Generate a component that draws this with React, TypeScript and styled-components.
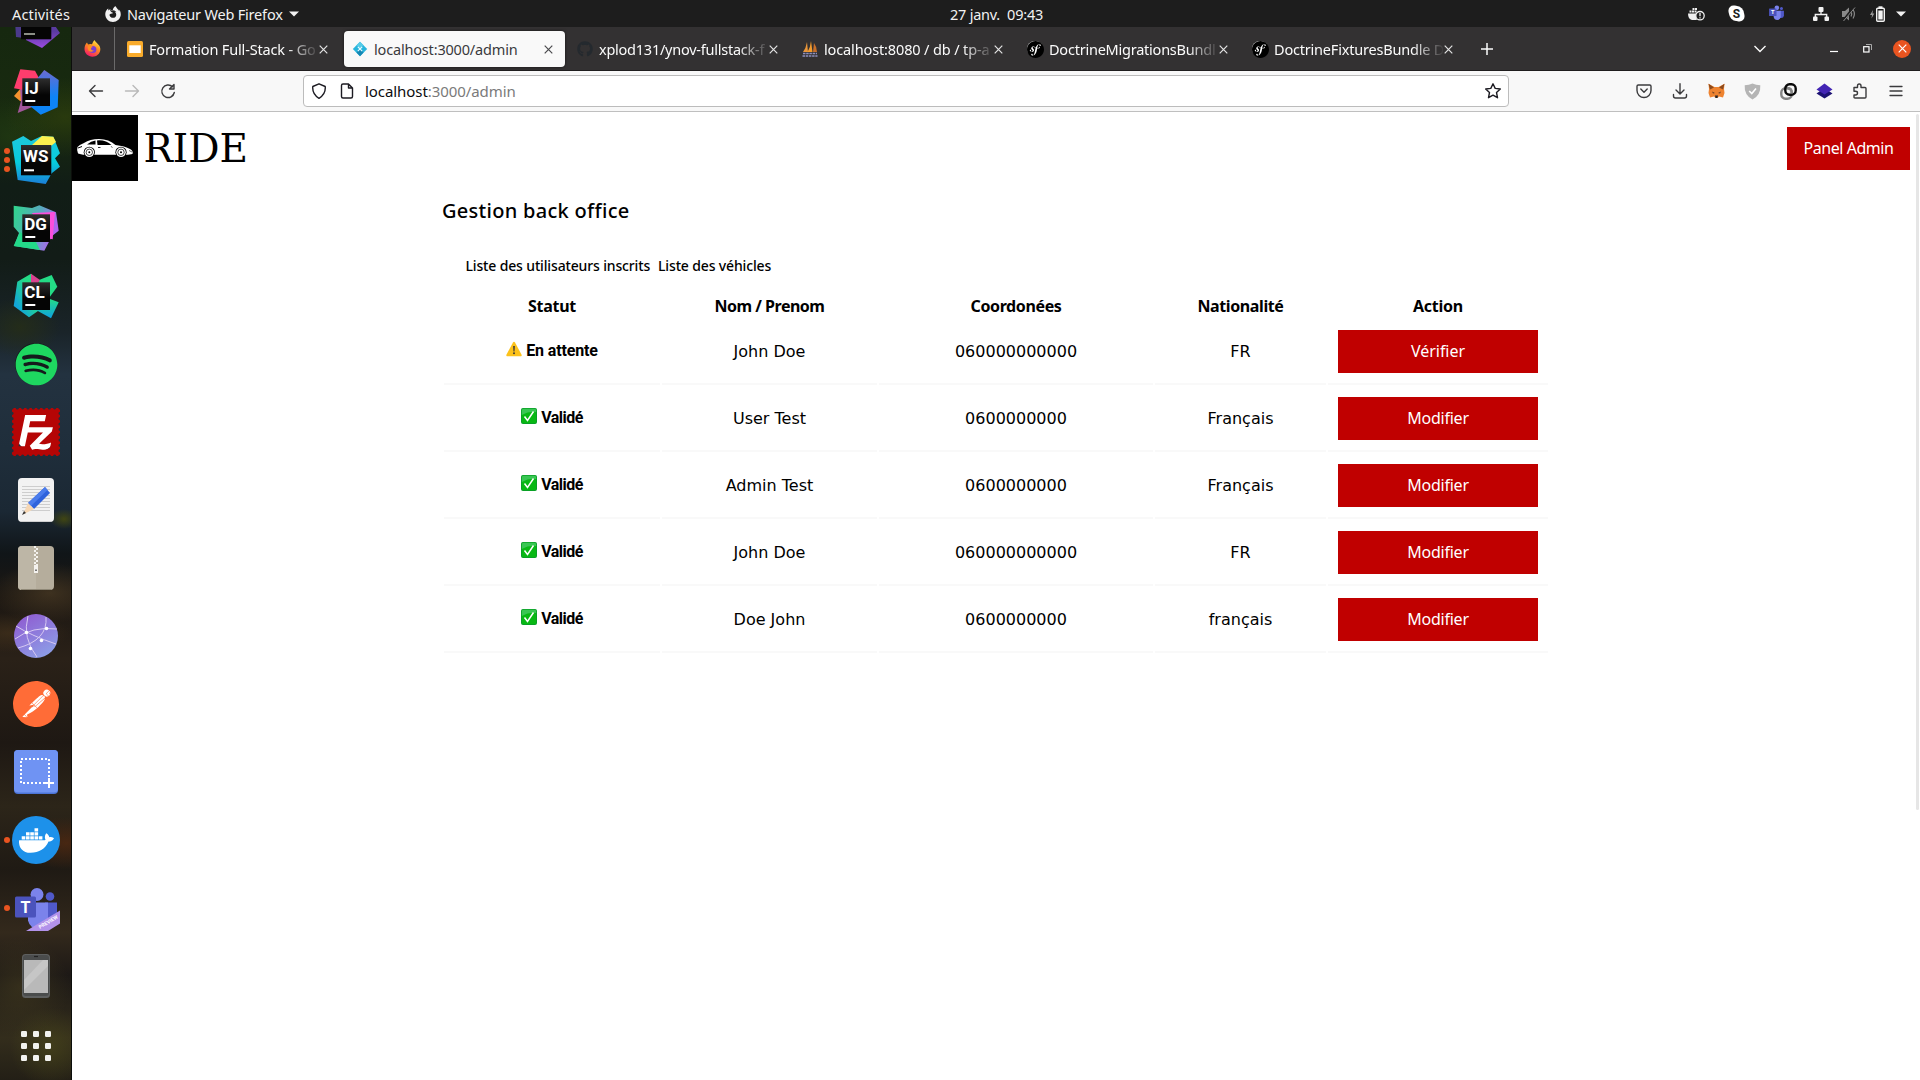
import React from "react";
import styled, { createGlobalStyle } from "styled-components";
import { SiSymfony, SiFilezilla, SiPostman, SiFirefoxbrowser } from "react-icons/si";
import { FaSpotify, FaDocker, FaGithub } from "react-icons/fa";

const UI = `"Noto Sans", "Open Sans", sans-serif`;

const GlobalStyle = createGlobalStyle`
  * { box-sizing: border-box; }
  html, body { margin: 0; background: #fff; overflow: hidden; }
  svg { display: block; flex: none; }
`;

/* ---------- Shell ---------- */
const Screen = styled.div`
  width: 1920px;
  height: 1080px;
  display: grid;
  grid-template: 27px 1053px / 72px 1848px;
  font-family: ${UI};
  overflow: hidden;
`;

const Label = styled.span<{ $ls?: number }>`
  white-space: pre;
  letter-spacing: ${(p) => p.$ls ?? 0}px;
`;

const TopBar = styled.header`
  grid-column: 1 / 3;
  background: #1d1d1d;
  color: #f2f2f2;
  font-size: 14.5px;
  line-height: 26px;
  display: grid;
  grid-template-columns: 950px 1fr auto;
  align-items: center;
`;

const TopLeft = styled.div`
  display: flex;
  align-items: center;
  padding-left: 12px;
`;

const AppMenu = styled.div`
  display: flex;
  align-items: center;
  margin-left: 35px;
  gap: 6px;
`;

const Tray = styled.div`
  display: flex;
  align-items: center;
  padding-right: 14px;
`;

const TrayItem = styled.div<{ $w: number }>`
  width: ${(p) => p.$w}px;
  display: flex;
  justify-content: center;
`;

/* ---------- Dock ---------- */
const Dock = styled.nav`
  display: flex;
  flex-direction: column;
  overflow: hidden;
  border-right: 1px solid #0c0e0b;
  background:
    radial-gradient(60px 40px at 65px 90px, rgba(52, 68, 12, 0.6), transparent),
    radial-gradient(50px 40px at 10px 110px, rgba(34, 60, 18, 0.7), transparent),
    radial-gradient(14px 10px at 64px 492px, rgba(74, 78, 12, 0.8), transparent),
    radial-gradient(40px 30px at 20px 300px, rgba(40, 48, 20, 0.7), transparent),
    radial-gradient(60px 30px at 50px 566px, rgba(84, 66, 40, 0.6), transparent),
    radial-gradient(60px 20px at 10px 606px, rgba(80, 58, 30, 0.5), transparent),
    radial-gradient(50px 26px at 66px 816px, rgba(86, 42, 16, 0.7), transparent),
    radial-gradient(50px 50px at 20px 960px, rgba(66, 58, 30, 0.6), transparent),
    radial-gradient(40px 40px at 50px 1020px, rgba(76, 74, 26, 0.6), transparent),
    linear-gradient(180deg, #16280f 0%, #182a10 9%, #111d16 15%, #121c17 22%, #1a2429 29%, #233240 33%, #1f2e3b 40%, #1b2834 46%, #101518 50%, #1c1712 54%, #2a2118 60%, #1e1813 68%, #2c2519 74%, #1f1a14 80%, #33291c 86%, #1d1916 90%, #332d1c 96%, #231f16 100%);
`;

const DockSlot = styled.div<{ $first?: boolean }>`
  height: ${(p) => (p.$first ? 31 : 68)}px;
  padding-left: 5px;
  display: grid;
  grid-template-columns: 7px 48px;
  align-items: ${(p) => (p.$first ? "start" : "center")};
  overflow: ${(p) => (p.$first ? "hidden" : "visible")};
  flex: none;
  > div:last-child { margin-top: ${(p) => (p.$first ? -27 : 0)}px; }
`;

const Dots = styled.div`
  display: flex;
  flex-direction: column;
  gap: 3px;
  margin-right: 2px;
`;

const Dot = styled.i`
  width: 6px;
  height: 6px;
  border-radius: 50%;
  background: #e95420;
  flex: none;
  margin-left: -1px;
`;

const DockIcon = styled.div`
  width: 48px;
  height: 48px;
  display: flex;
  align-items: center;
  justify-content: center;
`;

const Disc = styled.div<{ $size: number; $bg: string }>`
  width: ${(p) => p.$size}px;
  height: ${(p) => p.$size}px;
  border-radius: 50%;
  background: ${(p) => p.$bg};
  display: flex;
  align-items: center;
  justify-content: center;
  flex: none;
`;

/* ---------- Browser ---------- */
const Browser = styled.section`
  display: flex;
  flex-direction: column;
  min-width: 0;
`;

const TabStrip = styled.div`
  height: 44px;
  flex: none;
  background: #333132;
  border-bottom: 1px solid #1f1d1e;
  display: flex;
  align-items: stretch;
`;

const PinnedTab = styled.div`
  width: 43px;
  border-right: 1px solid #6b6a6a;
  display: flex;
  align-items: center;
  padding-left: 12px;
  margin-right: 4px;
`;

const TabBox = styled.div<{ $active?: boolean }>`
  width: 221px;
  margin: 4px 4px 3px 0;
  padding: 0 12px 0 8px;
  border-radius: 4px;
  display: flex;
  align-items: center;
  background: ${(p) => (p.$active ? "#f9f9f9" : "transparent")};
  color: ${(p) => (p.$active ? "#3a3a3d" : "#fbfbfb")};
  box-shadow: ${(p) => (p.$active ? "0 0 3px rgba(0,0,0,.6)" : "none")};
  font-size: 14.5px;
  line-height: 36px;
`;

const TabIcon = styled.div`
  width: 16px;
  height: 16px;
  flex: none;
  margin-right: 6px;
`;

const TabTitle = styled.div<{ $fade?: boolean }>`
  width: 169px;
  overflow: hidden;
  white-space: pre;
  margin-right: 1px;
  mask-image: ${(p) => (p.$fade ? "linear-gradient(90deg, #000 82%, transparent 101%)" : "none")};
`;

const Spacer = styled.div`flex: 1;`;

const WindowButtons = styled.div`
  display: flex;
  align-items: center;
`;

const Slot = styled.div<{ $w: number }>`
  width: ${(p) => p.$w}px;
  display: flex;
  align-items: center;
  justify-content: center;
  flex: none;
`;

const Toolbar = styled.div`
  height: 41px;
  flex: none;
  background: #f8f8f8;
  border-bottom: 1px solid #bfbfbf;
  display: flex;
  align-items: center;
  padding-left: 6px;
`;

const UrlBar = styled.div`
  width: 1206px;
  height: 32px;
  margin-left: 117px;
  border: 1px solid #bcbcbc;
  border-radius: 4px;
  background: #fff;
  display: flex;
  align-items: center;
  padding: 0 7px;
`;

const UrlText = styled.div`
  flex: 1;
  margin-left: 10px;
  font-size: 15px;
  line-height: 28px;
  color: #7a7a7a;
  letter-spacing: -0.07px;
  b { font-weight: 400; color: #0c0c0d; }
`;

const Extensions = styled.div`
  display: flex;
  margin-left: auto;
  padding-right: 6px;
`;

/* ---------- Page ---------- */
const Viewport = styled.div`
  flex: 1;
  position: relative;
  background: #fff;
  color: #000;
`;

const ScrollThumb = styled.div`
  position: absolute;
  top: 2px;
  right: 1px;
  width: 3px;
  height: 696px;
  border-radius: 2px;
  background: #e6e6e6;
`;

const SiteHeader = styled.div`
  height: 72px;
  padding: 3px 10px 3px 0;
  display: flex;
  align-items: center;
`;

const Logo = styled.div`
  width: 66px;
  height: 66px;
  background: #000;
`;

const Brand = styled.div`
  margin: 2px 0 0 5.5px;
  font: 39px/60px "DejaVu Serif", serif;
`;

const RedButton = styled.button<{ $w: number; $ls: number }>`
  display: block;
  width: ${(p) => p.$w}px;
  height: 43px;
  margin: 0 auto;
  border: 0;
  padding: 0 0 1px;
  background: #c00000;
  color: #fff;
  font: 16px/42px ${UI};
  letter-spacing: ${(p) => p.$ls}px;
`;

const Main = styled.main`
  width: 1108px;
  margin: 0 auto;
  padding-top: 15px;
`;

const Title = styled.h2`
  margin: 0;
  font-size: 20px;
  line-height: 24px;
  font-weight: 500;
  letter-spacing: 0.29px;
`;

const LinkRow = styled.div`
  margin-top: 33px;
  padding-left: 23.5px;
  display: flex;
  gap: 8px;
  font-size: 14px;
  font-weight: 500;
  line-height: 20px;
  letter-spacing: -0.15px;
`;

const Table = styled.table`
  width: 1108px;
  margin-top: 19px;
  table-layout: fixed;
  border-collapse: separate;
  border-spacing: 2px;
  text-align: center;
  font: 16px "DejaVu Sans", sans-serif;
`;

const Th = styled.th<{ $w: number; $ls: number }>`
  width: ${(p) => p.$w}px;
  height: 21px;
  padding: 0 0 2px;
  font: 700 16px/19px ${UI};
  letter-spacing: ${(p) => p.$ls}px;
`;

const Td = styled.td`
  height: 65px;
  padding: 10px 0;
  line-height: 43px;
  border-bottom: 2px solid #f9f9f9;
`;

const Status = styled.div<{ $ls: number }>`
  display: flex;
  align-items: center;
  justify-content: center;
  gap: 4px;
  font: 700 16px/42px Roboto, sans-serif;
  letter-spacing: ${(p) => p.$ls}px;
  padding-bottom: 1px;
  svg { margin-top: -4px; }
`;

/* ---------- Drawings ---------- */
const JetBox = ({ text, x, size }: { text: string; x: number; size: number }) => (
  <>
    <rect x={x} y={x} width={size} height={size} fill="url(#jetblack)" />
    <text x={x + 2} y={x + size * 0.56} fill="#fff" fontFamily="Roboto, sans-serif" fontWeight="700" fontSize="17">{text}</text>
    <rect x={x + 3} y={x + size - 6} width="10" height="2" fill="#fff" />
  </>
);

const Defs = () => (
  <defs>
    <linearGradient id="jetblack" x1="0" y1="0" x2="0" y2="1"><stop offset="0" stopColor="#2e2e2e" /><stop offset=".6" stopColor="#050505" /></linearGradient>
    <linearGradient id="ijb" x1="0" y1="0" x2="0" y2="1"><stop offset="0" stopColor="#6b6bd0" /><stop offset=".6" stopColor="#0d84f6" /></linearGradient>
    <linearGradient id="wsg" x1="0" y1="0" x2="0" y2="1"><stop offset="0" stopColor="#1ec8dc" /><stop offset=".55" stopColor="#07cddc" /><stop offset="1" stopColor="#1b7fd8" /></linearGradient>
    <linearGradient id="dgg" x1="0" y1="0" x2="1" y2=".3"><stop offset="0" stopColor="#2fd68b" /><stop offset=".6" stopColor="#5aa8c0" /><stop offset="1" stopColor="#b162f0" /></linearGradient>
    <linearGradient id="clg" x1="1" y1="0" x2="0" y2="1"><stop offset=".35" stopColor="#24dc86" /><stop offset=".8" stopColor="#12a5d8" /></linearGradient>
    <linearGradient id="clg2" x1="0" y1="0" x2="0" y2="1"><stop offset="0" stopColor="#24dc86" /><stop offset="1" stopColor="#0e9fe0" /></linearGradient>
    <linearGradient id="prp" x1="0" y1="0" x2="0" y2="1"><stop offset=".4" stopColor="#5a3aa0" /><stop offset="1" stopColor="#9a4be0" /></linearGradient>
    <linearGradient id="web" x1="0" y1="0" x2=".6" y2="1"><stop offset="0" stopColor="#8f55cf" /><stop offset="1" stopColor="#8d9be6" /></linearGradient>
    <linearGradient id="ffx" x1=".8" y1="0" x2=".3" y2="1"><stop offset="0" stopColor="#fff04a" /><stop offset=".45" stopColor="#ff8a1e" /><stop offset="1" stopColor="#f5156c" /></linearGradient>
  </defs>
);

const PurpleJet = () => (
  <svg width="48" height="48" viewBox="0 0 48 48">
    <Defs />
    <path d="M3 20H12V38L4 37Z" fill="#4a3a8a" />
    <path d="M14 38L39 20L48 33L30 48L14 40Z" fill="url(#prp)" />
    <rect x="9" y="9" width="30.300" height="30.300" fill="url(#jetblack)" />
    <rect x="12" y="33" width="11" height="2" fill="#8b8f86" />
  </svg>
);
const IJ = () => (
  <svg width="48" height="48" viewBox="0 0 48 48">
    <path d="M2 28L9 20L12 34L8 33Z" fill="#f5922f" />
    <path d="M8 20H30L25 37L5.700 45L9 33Z" fill="#a2569a" />
    <path d="M8.300 1.300L23 2.700L28 12L12 22L2 20.300Z" fill="#fe3d6d" />
    <path d="M32.300 2L46.700 12L45.700 39.300L28.700 46.700L18 38L24 12Z" fill="url(#ijb)" />
    <JetBox text="IJ" x={10.3} size={27.7} />
  </svg>
);
const WS = () => (
  <svg width="48" height="48" viewBox="0 0 48 48">
    <path d="M0 5.700L11.300 0L19 5L29.700 0L41.300 .7L48 17.300L43 22.300L48 30.700L39.700 37.300L33.700 48L5.700 44Z" fill="url(#wsg)" />
    <path d="M20 9L30 0L41.300 .7L44 6L39 10Z" fill="#fcf04f" />
    <JetBox text="WS" x={9} size={30.3} />
  </svg>
);
const DG = () => (
  <svg width="48" height="48" viewBox="0 0 48 48">
    <path d="M27.300 1.300L44 8.300L46.700 26.700L40 32L32.300 46.700L2 42L7 29L1.700 22.700V1.700L20 4Z" fill="url(#dgg)" />
    <path d="M1.700 42L8 28L24 38L28 46Z" fill="#23d989" />
    <path d="M20 9L43 8L40.700 35.300L34 34Z" fill="#fb4fdc" />
    <JetBox text="DG" x={10.3} size={27.7} />
  </svg>
);
const CL = () => (
  <svg width="48" height="48" viewBox="0 0 48 48">
    <path d="M19 1.700L5.300 9.700L1.700 34L17 45.300L26 39L26 8Z" fill="url(#clg)" />
    <path d="M24 38L38 27L46.700 30.300L39 46.300Z" fill="url(#clg2)" />
    <path d="M27 8L39.700 3L45.300 14.700L37 26L24 20Z" fill="#24dc86" />
    <path d="M19 1.700L28 8L24 14H19Z" fill="#d8418f" />
    <JetBox text="CL" x={10.3} size={27.7} />
  </svg>
);
const Spotify = () => <Disc $size={42} $bg="#151a1c"><FaSpotify size={43} color="#1ed760" /></Disc>;
const FileZillaTile = styled.div`
  width: 48px;
  height: 48px;
  background: radial-gradient(circle, #fff 0 20px, transparent 21px);
  svg { width: 48px; height: 48px; color: #b50505; }
`;
const Doc = () => (
  <svg width="48" height="48" viewBox="0 0 48 48">
    <rect x="6" y="2" width="36" height="44" rx="4" fill="#f2f2f2" />
    <path d="M9 45.500H39" stroke="#cfcfcf" />
    <path d="M10 10.500H38M10 13.500H38M10 16.500H38M10 19.500H38M10 22.500H38M10 25.500H38M10 28.500H38M10 31.500H38M10 34.500H38" stroke="#cdcdcd" />
    <path d="M33 11L38 17L22 33L16 27Z" fill="#2f63dc" /><path d="M33 11L35.500 14L19 30L16 27Z" fill="#4a7cec" />
    <path d="M16 27L22 33L11 38.500Z" fill="#f6d7b4" /><path d="M12 35L14 37L10 39Z" fill="#333" />
  </svg>
);
const Zip = () => (
  <svg width="48" height="48" viewBox="0 0 48 48">
    <rect x="6" y="2" width="36" height="44" rx="4" fill="#b5ad9c" />
    <path d="M24 2H10Q6 2 6 6V42Q6 46 10 46H24Z" fill="#bdb6a6" />
    <path d="M9 45.500H39" stroke="#8f8877" />
    <path d="M23 2V22" stroke="#f4f2ee" strokeWidth="2" strokeDasharray="2 2" /><path d="M25 4V22" stroke="#f4f2ee" strokeWidth="2" strokeDasharray="2 2" />
    <rect x="22" y="21" width="4" height="8" fill="#f4f2ee" /><rect x="23" y="25.500" width="2" height="1.500" fill="#777" />
  </svg>
);
const Web = () => (
  <svg width="48" height="48" viewBox="0 0 48 48">
    <circle cx="24" cy="24" r="22" fill="url(#web)" />
    <g stroke="#d6c8f2" strokeWidth="1" fill="none"><path d="M4 14Q20 24 44 32M16 4Q10 26 25 45M34 5Q36 28 6 36M3 27Q20 14 45 17" /></g>
    <g fill="#fff"><circle cx="14.500" cy="20.500" r="1.800" /><circle cx="34.500" cy="16.500" r="1.800" /><circle cx="29.500" cy="28.500" r="1.800" /><circle cx="18.500" cy="36.500" r="1.800" /></g>
  </svg>
);
const Shot = () => (
  <svg width="48" height="48" viewBox="0 0 48 48">
    <rect x="2" y="2" width="44" height="44" rx="4" fill="#4c74d6" /><rect x="2" y="2" width="44" height="42.500" rx="4" fill="#6f93f3" />
    <rect x="9" y="11" width="28" height="24" fill="none" stroke="#fff" strokeWidth="2" strokeDasharray="2 2" />
    <path d="M37 30V40M32 35H42" stroke="#fff" strokeWidth="2" />
  </svg>
);
const TeamsIcon = ({ size, preview }: { size: number; preview?: boolean }) => (
  <svg width={size} height={size} viewBox={preview ? "0 -2.5 48 48" : "0 0 48 48"}>
    <circle cx="25" cy="8" r="6.500" fill="#7b83eb" /><circle cx="38" cy="10" r="4.300" fill="#5059c9" />
    <path d="M33 16H45V30Q44 37 37 37H33Z" fill="#5059c9" />
    <path d="M16 16H36V34Q34 42 26 42Q18 42 16 34Z" fill="#7b83eb" />
    <rect x="3" y="10" width="21" height="21" rx="1.500" fill="#4b53bc" />
    <text x="13.500" y="26" textAnchor="middle" fill="#fff" fontFamily="Roboto, sans-serif" fontWeight="700" fontSize="16">T</text>
    {preview && (
      <>
        <path d="M14 44.500L48 24V37L36 44.500Z" fill="#b292ea" />
        <text transform="translate(28 42.500) rotate(-31)" fill="#fff" fontFamily="Roboto, sans-serif" fontWeight="700" fontSize="5">PREVIEW</text>
      </>
    )}
  </svg>
);
const Phone = () => (
  <svg width="48" height="48" viewBox="0 0 48 48">
    <rect x="10" y="2" width="28" height="44" rx="3.500" fill="#5d5f5f" /><rect x="11" y="3" width="26" height="41" rx="3" fill="#4a4c4c" />
    <rect x="12" y="8" width="24" height="33" fill="#b9b9b9" /><path d="M12 28L31 8H36V14L12 38Z" fill="#c6c6c6" />
    <path d="M22 4.500H26" stroke="#222" strokeWidth="1.200" />
  </svg>
);
const Grid = () => (
  <svg width="48" height="48" viewBox="0 0 48 48">
    {[0, 1, 2].map((r) => [0, 1, 2].map((c) => <rect key={`${r}${c}`} x={9 + c * 12} y={11 + r * 12} width="6" height="6" rx="1.200" fill="#f2f2ef" />))}
  </svg>
);

const Close = ({ c = "#e4e4e4" }) => (
  <svg width="9" height="9" viewBox="0 0 9 9"><path d="M.7.7L8.300 8.300M8.300.7L.7 8.300" stroke={c} strokeWidth="1.200" /></svg>
);
const Stroke = ({ d, size = 16, c = "#3b3b3d", w = 1.4 }: { d: string; size?: number; c?: string; w?: number }) => (
  <svg width={size} height={size} viewBox="0 0 16 16" fill="none" stroke={c} strokeWidth={w} strokeLinecap="round" strokeLinejoin="round"><path d={d} /></svg>
);
const FirefoxColor = () => (
  <svg width="17" height="17" viewBox="0 0 17 17">
    <path d="M10.500 0C11 1.600 12.500 2.200 14 4.300C16 6 16.500 8 16.300 10C15.800 14 12.500 16.700 8.500 16.700C4 16.700.5 13.200.5 9C.5 6.300 1.500 4 3 2.500L4 4.500Q6 3.500 8 4.200Q9 1.500 10.500 0Z" fill="url(#ffx)" />
    <circle cx="8.800" cy="9.500" r="3.600" fill="#7a3fd0" /><path d="M4 6Q7 5 9 7Q7 7 7 8.500Q7 10.500 10 10.500Q7 13 4.500 10.500Q3 8 4 6Z" fill="#ff8f22" />
  </svg>
);
const Slides = () => (
  <svg width="16" height="16" viewBox="0 0 16 16"><rect width="16" height="16" rx="1.500" fill="#f9ab2b" /><rect x="2.300" y="4.300" width="11.400" height="7.700" fill="#fff" /></svg>
);
const DiamondIcon = () => (
  <svg width="16" height="16" viewBox="0 0 16 16">
    <path d="M8 .8L15.200 8L8 15.200L.8 8Z" fill="#27b4dc" /><path d="M8 .8L11.500 4.300L8 8L4.500 4.300Z" fill="#55cbe8" /><path d="M8 8L11.500 11.500L8 15.200L4.500 11.500Z" fill="#1688b4" />
    <path d="M5.800 5.800L10.200 10.200M10.200 5.800L5.800 10.200" stroke="#eafaff" strokeWidth="1.100" />
  </svg>
);
const Sails = () => (
  <svg width="16" height="16" viewBox="0 0 16 16">
    <path d="M5 1L6 11H1Q4 7 5 1Z" fill="#e9963a" /><path d="M9 0L10.500 11H5.500Q8.500 6 9 0Z" fill="#f39b2d" /><path d="M12 2Q15 6 15 11H11Z" fill="#c8702a" />
    <path d="M1 12.500H15M.5 15H15.500" stroke="#8e8fbd" strokeWidth="1.700" strokeDasharray="2.500 .7" />
  </svg>
);
const Fox = () => (
  <svg width="17" height="16" viewBox="0 0 17 16">
    <path d="M.5.8L6.500 4H10.500L16.500.8L16 6L16.500 10L15 14.500L11 13.500L9.500 15H7.500L6 13.500L2 14.500L.5 10L1 6Z" fill="#ee8330" />
    <path d="M.5.8L6 4.500L2 6.500ZM16.500.8L11 4.500L15 6.500Z" fill="#8a4a1e" /><path d="M4 8.500L7 10L5 10.500ZM13 8.500L10 10L12 10.500Z" fill="#5a3a24" /><path d="M7 12.500H10L9.500 15H7.500Z" fill="#20242a" />
  </svg>
);
const ShieldCheck = () => (
  <svg width="17" height="17" viewBox="0 0 17 17"><path d="M8.500.5Q12 2 16.300 2.200Q17 12 8.500 16.500Q0 12 .7 2.200Q5 2 8.500.5Z" fill="#b5b5b5" /><path d="M5.200 8L7.800 10.600L12 5.500" fill="none" stroke="#fff" strokeWidth="1.600" /></svg>
);
const Rings = () => (
  <svg width="17" height="17" viewBox="0 0 17 17" fill="none" strokeWidth="2.400">
    <rect x="1.300" y="5.300" width="10.400" height="10.400" rx="4.200" stroke="#858585" />
    <rect x="5.300" y="1.300" width="10.400" height="10.400" rx="4.200" stroke="#0a0a0a" />
    <path d="M7.500 5.300Q11.700 5.300 11.700 9.500V10.500" stroke="#858585" />
  </svg>
);
const Layers = () => (
  <svg width="17" height="16" viewBox="0 0 17 16"><path d="M8.500 5L16.500 10.500L8.500 15.500L.5 10.500Z" fill="#1c1273" /><path d="M8.500 .5L16.500 6.500L8.500 11.500L.5 6.500Z" fill="#4325b4" /></svg>
);
const DockerTray = () => (
  <svg width="17" height="16" viewBox="0 0 17 16"><path d="M0 7.500H9Q7 11 9 14H4Q0 13 0 7.500Z" fill="#f0f0f0" /><path d="M1.500 5.500H9M4.500 3H9" stroke="#f0f0f0" strokeWidth="2" strokeDasharray="2 .5" /><circle cx="12" cy="9.700" r="4.200" fill="#1d1d1d" stroke="#f0f0f0" strokeWidth="1.300" /><path d="M12 7V10.200M12 11.300V12.500" stroke="#f0f0f0" strokeWidth="1.300" /></svg>
);
const SkypeTray = () => (
  <svg width="17" height="17" viewBox="0 0 17 17"><rect x=".5" y=".5" width="11" height="11" rx="5" fill="#fff" /><rect x="5.500" y="5.500" width="11" height="11" rx="5" fill="#fff" /><circle cx="8.500" cy="8.500" r="7.400" fill="#fff" />
    <text x="8.500" y="12.700" textAnchor="middle" fill="#1d1d1d" fontFamily="Roboto, sans-serif" fontWeight="700" fontSize="12">S</text></svg>
);
const Network = () => (
  <svg width="16" height="16" viewBox="0 0 16 16"><g fill="#f2f2f2"><rect x="5.500" y="1" width="5" height="5" rx="1" /><rect x="0" y="10.500" width="4.500" height="4.500" rx="1" /><rect x="11.500" y="10.500" width="4.500" height="4.500" rx="1" /></g><path d="M8 5V8.500M2.300 11V8.500H13.700V11" stroke="#f2f2f2" fill="none" strokeWidth="1.300" /></svg>
);
const Muted = () => (
  <svg width="16" height="16" viewBox="0 0 16 16"><path d="M1 5H4L8 1.500V14.500L4 11H1Z" fill="#8a8a8a" /><path d="M10 5.500Q11.500 8 10 10.500M12 3.500Q14.800 8 12 12.500" stroke="#8a8a8a" fill="none" strokeWidth="1.200" /><path d="M13 1L2 15" stroke="#1d1d1d" strokeWidth="2.500" /><path d="M14 1.500L2.500 15" stroke="#8a8a8a" /></svg>
);
const Battery = () => (
  <svg width="15" height="16" viewBox="0 0 15 16"><path d="M3 4L0 9H2L1.500 12.500L4.300 7.500H2.500Z" fill="#9a9a9a" /><rect x="6.700" y="2.200" width="7.600" height="13" rx="1" fill="none" stroke="#f2f2f2" strokeWidth="1.400" /><rect x="8.500" y=".3" width="4" height="2" fill="#f2f2f2" /><rect x="8.300" y="4.500" width="4.400" height="9" fill="#f2f2f2" /></svg>
);
const Caret = () => <svg width="10" height="6" viewBox="0 0 10 6"><path d="M0 .5H10L5 5.500Z" fill="#f2f2f2" /></svg>;

const Car = () => (
  <svg width="66" height="66" viewBox="0 0 66 66">
    <path d="M5.500 32Q7 30 12 28Q18 24 27 24Q37 24 43.500 30Q53 31 58 34Q61.500 36 60.500 39L56 39.800H11L6 38.500Q4.500 35 5.500 32Z" fill="#fff" />
    <path d="M15 29.500Q19 25.800 23.500 25.500V29.500ZM25 25.400Q34 24.700 39.500 30L25.500 30Z" fill="#000" />
    <path d="M39 31L40.500 33" stroke="#000" strokeWidth=".5" fill="none" /><path d="M26 32.500H28.500" stroke="#000" strokeWidth=".8" /><path d="M6 33L10 31.500" stroke="#000" /><path d="M57 35.500L60 37" stroke="#000" strokeWidth=".6" />
    {[17.3, 49].map((x) => (
      <g key={x}><circle cx={x} cy="37.300" r="5.600" fill="#000" /><circle cx={x} cy="37.300" r="4.800" fill="#fff" /><circle cx={x} cy="37.300" r="3.200" fill="none" stroke="#000" strokeWidth=".7" /><circle cx={x} cy="37.300" r="1" fill="#000" /></g>
    ))}
  </svg>
);
const Warn = () => (
  <svg width="16" height="16" viewBox="0 0 16 16"><path d="M8 .8Q8.600 .8 9 1.500L15.600 13.800Q15.900 15.200 15 15.200H1Q.1 15.200 .4 13.800L7 1.500Q7.400 .8 8 .8Z" fill="#fcc21b" /><path d="M7.100 5H8.900L8.500 10.500H7.500Z" fill="#3e3a36" /><circle cx="8" cy="12.300" r="1" fill="#3e3a36" /></svg>
);
const Check = () => (
  <svg width="16" height="16" viewBox="0 0 16 16"><rect width="16" height="16" rx="2" fill="#0a9a2b" /><rect x=".8" y=".8" width="14.400" height="14.400" rx="1.500" fill="#08b814" /><path d="M.8 2.500Q.8.8 2.500.8H13.500Q15.200.8 15.200 2.500V4Q8 3 .8 7Z" fill="#39c653" /><path d="M3.500 8.500L6.500 12.500L12.500 3.500" fill="none" stroke="#fff" strokeWidth="1.500" /></svg>
);
const SymfonyIcon = () => <Disc $size={16} $bg="#fff"><SiSymfony size={17} color="#000" /></Disc>;

/* ---------- Data ---------- */
const dock: { icon: React.ReactNode; dots?: number; first?: boolean }[] = [
  { icon: <PurpleJet />, first: true },
  { icon: <IJ /> },
  { icon: <WS />, dots: 3 },
  { icon: <DG /> },
  { icon: <CL /> },
  { icon: <Spotify /> },
  { icon: <FileZillaTile><SiFilezilla /></FileZillaTile> },
  { icon: <Doc /> },
  { icon: <Zip /> },
  { icon: <Web /> },
  { icon: <Disc $size={44} $bg="#fff"><SiPostman size={46} color="#ff6c37" /></Disc> },
  { icon: <Shot /> },
  { icon: <Disc $size={48} $bg="#1d91ea"><FaDocker size={35} color="#fff" /></Disc>, dots: 1 },
  { icon: <TeamsIcon size={48} preview />, dots: 1 },
  { icon: <Phone /> },
  { icon: <Grid /> },
];

const tabs = [
  { icon: <Slides />, title: "Formation Full-Stack - Go", ls: -0.16 },
  { icon: <DiamondIcon />, title: "localhost:3000/admin", ls: -0.177, active: true },
  { icon: <FaGithub size={16} color="#24292e" />, title: "xplod131/ynov-fullstack-f", ls: -0.245 },
  { icon: <Sails />, title: "localhost:8080 / db / tp-a", ls: -0.133 },
  { icon: <SymfonyIcon />, title: "DoctrineMigrationsBundl", ls: -0.23 },
  { icon: <SymfonyIcon />, title: "DoctrineFixturesBundle D", ls: -0.2 },
];

const heads = [
  { t: "Statut", w: 216, ls: -0.273 },
  { t: "Nom / Prenom", w: 215, ls: -0.5 },
  { t: "Coordonées", w: 274, ls: -0.377 },
  { t: "Nationalité", w: 171, ls: -0.396 },
  { t: "Action", w: 220, ls: -0.245 },
];

const users = [
  { ok: false, name: "John Doe", tel: "060000000000", nat: "FR" },
  { ok: true, name: "User Test", tel: "0600000000", nat: "Français" },
  { ok: true, name: "Admin Test", tel: "0600000000", nat: "Français" },
  { ok: true, name: "John Doe", tel: "060000000000", nat: "FR" },
  { ok: true, name: "Doe John", tel: "0600000000", nat: "français" },
];

export default function App() {
  return (
    <Screen>
      <GlobalStyle />
      <TopBar>
        <TopLeft>
          <Label $ls={0.148}>Activités</Label>
          <AppMenu>
            <SiFirefoxbrowser size={16} />
            <Label $ls={-0.186}>Navigateur Web Firefox</Label>
            <Caret />
          </AppMenu>
        </TopLeft>
        <Label $ls={-0.231}>{"27 janv.  09:43"}</Label>
        <Tray>
          <TrayItem $w={52}><DockerTray /></TrayItem>
          <TrayItem $w={28}><SkypeTray /></TrayItem>
          <TrayItem $w={52}><TeamsIcon size={17} /></TrayItem>
          <TrayItem $w={38}><Network /></TrayItem>
          <TrayItem $w={18}><Muted /></TrayItem>
          <TrayItem $w={38}><Battery /></TrayItem>
          <Caret />
        </Tray>
      </TopBar>

      <Dock>
        {dock.map((d, i) => (
          <DockSlot key={i} $first={d.first}>
            <Dots>{Array.from({ length: d.dots ?? 0 }, (_, k) => <Dot key={k} />)}</Dots>
            <DockIcon>{d.icon}</DockIcon>
          </DockSlot>
        ))}
      </Dock>

      <Browser>
        <TabStrip>
          <PinnedTab><FirefoxColor /></PinnedTab>
          {tabs.map((t) => (
            <TabBox key={t.title} $active={t.active}>
              <TabIcon>{t.icon}</TabIcon>
              <TabTitle $fade={!t.active}><Label $ls={t.ls}>{t.title}</Label></TabTitle>
              <Close c={t.active ? "#4a4a4d" : undefined} />
            </TabBox>
          ))}
          <Slot $w={36}><svg width="12" height="12" viewBox="0 0 12 12"><path d="M6 0V12M0 6H12" stroke="#fbfbfb" strokeWidth="1.500" /></svg></Slot>
          <Spacer />
          <WindowButtons>
            <Slot $w={114}><svg width="12" height="8" viewBox="0 0 12 8"><path d="M.5 1L6 6.500L11.500 1" stroke="#fbfbfb" strokeWidth="1.400" fill="none" /></svg></Slot>
            <Slot $w={34}><svg width="8" height="12" viewBox="0 0 8 12"><path d="M0 8.500H8" stroke="#fff" strokeWidth="1.200" /></svg></Slot>
            <Slot $w={33}><svg width="9" height="9" viewBox="0 0 9 9" fill="none"><path d="M3 .5H8.500V6" stroke="#aaa" /><rect x=".7" y="2.700" width="5.300" height="5.300" stroke="#fff" strokeWidth="1.200" /></svg></Slot>
            <Slot $w={36}><Disc $size={18} $bg="#e95420"><Close c="#fff" /></Disc></Slot>
          </WindowButtons>
        </TabStrip>

        <Toolbar>
          <Slot $w={36}><Stroke d="M14.500 8H1.500M7 2.500L1.500 8L7 13.500" /></Slot>
          <Slot $w={36}><Stroke c="#b9b9b9" d="M1.500 8H14.500M9 2.500L14.500 8L9 13.500" /></Slot>
          <Slot $w={36}><Stroke d="M14.300 9.500A6.300 6.300 0 1 1 12.500 3.700M14 1.500V6H9.500L14 1.500" /></Slot>
          <UrlBar>
            <Slot $w={16}><Stroke c="#1c1b22" d="M8 .8L14.200 3.500Q15 11 8 15.300Q1 11 1.800 3.500Z" /></Slot>
            <Slot $w={12} />
            <Slot $w={16}><Stroke c="#1c1b22" d="M9.500 1H4Q2.500 1 2.500 2.500V13.500Q2.500 15 4 15H12Q13.500 15 13.500 13.500V5L9.500 1V5H13.500" /></Slot>
            <UrlText><b>localhost</b>:3000/admin</UrlText>
            <Slot $w={16}><Stroke c="#1c1b22" d="M8 .8L10.200 5.400L15.300 6L11.500 9.500L12.500 14.700L8 12.100L3.500 14.700L4.500 9.500L.7 6L5.800 5.400Z" /></Slot>
          </UrlBar>
          <Extensions>
            <Slot $w={36}><Stroke d="M2.300 2H13.700Q15 2 15 3.300V7.500A7 7 0 0 1 1 7.500V3.300Q1 2 2.300 2ZM4.800 6L8 9.200L11.200 6" /></Slot>
            <Slot $w={36}><Stroke d="M8 .8V10.800M4 7L8 11L12 7M1.500 11.500V13Q1.500 15 3.500 15H12.500Q14.500 15 14.500 13V11.500" /></Slot>
            <Slot $w={36}><Fox /></Slot>
            <Slot $w={36}><ShieldCheck /></Slot>
            <Slot $w={36}><Rings /></Slot>
            <Slot $w={36}><Layers /></Slot>
            <Slot $w={36}><Stroke d="M2 4.500H5.500V3Q5.500 1 7.200 1Q9 1 9 3V4.500H13Q14 4.500 14 5.500V14Q14 15 13 15H3Q2 15 2 14V12H3.500Q5.500 12 5.500 10Q5.500 8.300 3.500 8.300H2Z" /></Slot>
            <Slot $w={36}><Stroke w={1.3} d="M2 3.500H14M2 8H14M2 12.500H14" /></Slot>
          </Extensions>
        </Toolbar>

        <Viewport>
          <SiteHeader>
            <Logo><Car /></Logo>
            <Brand>RIDE</Brand>
            <Spacer />
            <div><RedButton $w={123} $ls={-0.45}>Panel Admin</RedButton></div>
          </SiteHeader>
          <Main>
            <Title>Gestion back office</Title>
            <LinkRow><span>Liste des utilisateurs inscrits</span><span>Liste des véhicles</span></LinkRow>
            <Table>
              <thead><tr>{heads.map((h) => <Th key={h.t} $w={h.w} $ls={h.ls}>{h.t}</Th>)}</tr></thead>
              <tbody>
                {users.map((u, i) => (
                  <tr key={i}>
                    <Td><Status $ls={u.ok ? -0.55 : -0.15}>{u.ok ? <Check /> : <Warn />}{u.ok ? "Validé" : "En attente"}</Status></Td>
                    <Td>{u.name}</Td>
                    <Td>{u.tel}</Td>
                    <Td>{u.nat}</Td>
                    <Td><RedButton $w={200} $ls={u.ok ? -0.23 : -0.04}>{u.ok ? "Modifier" : "Vérifier"}</RedButton></Td>
                  </tr>
                ))}
              </tbody>
            </Table>
          </Main>
          <ScrollThumb />
        </Viewport>
      </Browser>
    </Screen>
  );
}
